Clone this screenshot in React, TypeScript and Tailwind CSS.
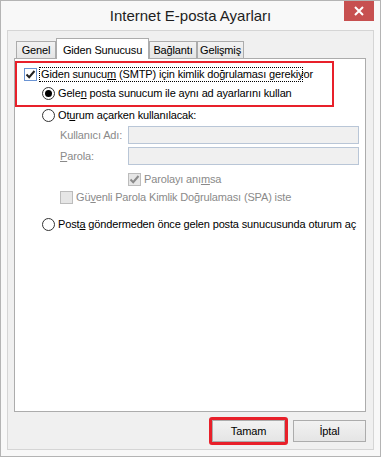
import type { ReactNode } from 'react'

function CheckBox({ checked, disabled }: { checked?: boolean; disabled?: boolean }) {
  return (
    <span
      className={
        'flex h-[13px] w-[13px] shrink-0 items-center justify-center border ' +
        (disabled ? 'border-[#bcbcbc] bg-[#e6e6e6]' : 'border-[#6a94d4] bg-white')
      }
    >
      {checked && (
        <svg width="11" height="11" viewBox="0 0 11 11">
          <path
            d="M1.5 5.5 L4.2 8.2 L9.5 2"
            fill="none"
            stroke={disabled ? '#8a8a8a' : '#222222'}
            strokeWidth="2"
          />
        </svg>
      )}
    </span>
  )
}

function Radio({ checked }: { checked?: boolean }) {
  return (
    <span className="flex h-[13px] w-[13px] shrink-0 items-center justify-center rounded-full border border-[#333333] bg-white">
      {checked && <span className="h-[7px] w-[7px] rounded-full bg-black" />}
    </span>
  )
}

function Tab({ children, selected, width }: { children: ReactNode; selected?: boolean; width: string }) {
  if (selected) {
    return (
      <div
        className={`${width} relative z-10 -mb-px flex h-[21px] items-start justify-center border border-b-0 border-[#acacac] bg-white pt-[3px]`}
      >
        {children}
      </div>
    )
  }
  return (
    <div
      className={`${width} flex h-[17px] items-center justify-center border border-b-0 border-[#acacac] bg-gradient-to-b from-[#f2f2f2] to-[#e5e5e5]`}
    >
      {children}
    </div>
  )
}

export default function App() {
  return (
    <div
      className="flex h-[457px] w-[381px] flex-col border border-[#b4b4b4] bg-[#f8f8f8] text-[11px] tracking-[-0.15px] text-black"
      style={{ fontFamily: '"Liberation Sans", Arial, sans-serif' }}
    >
      {/* title bar */}
      <div className="grid h-[29px] grid-cols-[1fr_auto_1fr]">
        <div />
        <div className="self-center text-[15px] leading-none tracking-normal text-[#1e1e1e]">Internet E-posta Ayarları</div>
        <div className="flex justify-end">
          <div className="mr-[6px] flex h-[20px] w-[30px] items-center justify-center bg-[#c75050]">
            <svg width="10" height="10" viewBox="0 0 10 10">
              <path d="M1 1 L9 9 M9 1 L1 9" stroke="white" strokeWidth="2" />
            </svg>
          </div>
        </div>
      </div>

      {/* client area */}
      <div className="mx-[6px] flex h-[420px] flex-col border border-[#d5d5d5] bg-[#f0f0f0] pl-[6px] pr-[7px] pt-[7px]">
        <div className="flex h-[20px] items-end pl-[2px]">
          <Tab width="w-[40px]">Genel</Tab>
          <Tab width="w-[93px]" selected>
            Giden Sunucusu
          </Tab>
          <Tab width="w-[48px]">Bağlantı</Tab>
          <Tab width="w-[47px]">Gelişmiş</Tab>
        </div>

        <div className="flex h-[354px] flex-col border border-[#acacac] bg-white">
          {/* highlighted block */}
          <div className="mt-[2px] flex h-[46px] w-[319px] flex-col border-2 border-[#e8202a]">
            <div className="mt-[4px] flex h-[15px] items-center pl-[7px]">
              <CheckBox checked />
              <span className="ml-[2px] block h-[15px] w-[264px] whitespace-nowrap border border-dotted border-black pl-[1px] leading-[13px]">
                Giden sunucu<u>m</u> (SMTP) için kimlik doğrulaması gerekiyor
              </span>
            </div>
            <div className="mt-[4px] flex h-[14px] items-center gap-[3px] pl-[25px]">
              <Radio checked />
              <span className="whitespace-nowrap">
                Gele<u>n</u> posta sunucum ile aynı ad ayarlarını kullan
              </span>
            </div>
          </div>

          <div className="mt-[1px] flex h-[14px] items-center gap-[3px] pl-[27px]">
            <Radio />
            <span className="whitespace-nowrap">
              Ot<u>u</u>rum açarken kullanılacak:
            </span>
          </div>

          <div className="mt-[4px] flex h-[18px] items-center pl-[45px] text-[#8a8a8a]">
            <span className="w-[68px]">Kullanıcı Adı:</span>
            <div className="h-[18px] w-[231px] border border-[#b9c6d7] bg-[#f0f0f0]" />
          </div>

          <div className="mt-[3px] flex h-[18px] items-center pl-[45px] text-[#8a8a8a]">
            <span className="w-[68px]">
              <u>P</u>arola:
            </span>
            <div className="h-[18px] w-[231px] border border-[#b9c6d7] bg-[#f0f0f0]" />
          </div>

          <div className="mt-[8px] flex h-[13px] items-center gap-[3px] pl-[113px] text-[#8a8a8a]">
            <CheckBox checked disabled />
            <span className="whitespace-nowrap">
              Parolayı anı<u>m</u>sa
            </span>
          </div>

          <div className="mt-[5px] flex h-[13px] items-center gap-[3px] pl-[45px] text-[#8a8a8a]">
            <CheckBox disabled />
            <span className="whitespace-nowrap">
              Gü<u>v</u>enli Parola Kimlik Doğrulaması (SPA) iste
            </span>
          </div>

          <div className="mt-[14px] flex h-[13px] items-center gap-[3px] pl-[27px]">
            <Radio />
            <span className="whitespace-nowrap">
              Post<u>a</u> göndermeden önce gelen posta sunucusunda oturum aç
            </span>
          </div>
        </div>

        {/* buttons */}
        <div className="mt-[8px] flex h-[22px] items-center justify-end gap-[5px]">
          <div className="-my-[3px] rounded-[3px] border-[3px] border-[#e8202a]">
            <button className="flex h-[22px] w-[73px] items-center justify-center border border-[#acacac] bg-gradient-to-b from-[#f2f2f2] to-[#e5e5e5]">
              Tamam
            </button>
          </div>
          <button className="flex h-[22px] w-[73px] items-center justify-center border border-[#acacac] bg-gradient-to-b from-[#f2f2f2] to-[#e5e5e5]">
            İptal
          </button>
        </div>
      </div>
    </div>
  )
}
